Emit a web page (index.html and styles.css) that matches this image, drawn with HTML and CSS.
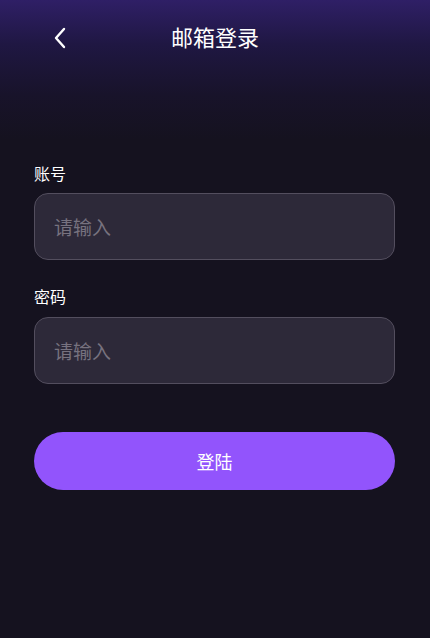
FILE: index.html
```html
<!DOCTYPE html>
<html lang="zh-CN">
<head>
    <meta charset="UTF-8">
    <meta name="viewport" content="width=device-width, initial-scale=1.0">
    <title>邮箱登录</title>
    <link rel="stylesheet" href="styles.css">
</head>
<body>
    <div class="page">
        <div class="header">
            <div class="back">
                <svg width="14" height="22" viewBox="0 0 14 22">
                    <path d="M11 2 L3 11 L11 20" fill="none" stroke="#ffffff" stroke-width="2.4" stroke-linecap="round" stroke-linejoin="round"/>
                </svg>
            </div>
            <h2 class="title">邮箱登录</h2>
        </div>
        <div class="form">
            <div class="label">账号</div>
            <input class="field" type="text" placeholder="请输入">
            <div class="label second">密码</div>
            <input class="field" type="password" placeholder="请输入">
            <button class="button">登陆</button>
        </div>
    </div>
</body>
</html>
```

FILE: styles.css
```css
body{
    margin: 0;
    width: 430px;
    height: 638px;
    background: #15121f;
    font-family: "Noto Sans CJK SC", "Noto Sans", sans-serif;
    overflow: hidden;
}
.page{
    height: 638px;
    background: linear-gradient(180deg, #2f1f66 0px, #1f1742 45px, #18132a 95px, #15121f 140px, #15121f 100%);
    display: flex;
    flex-direction: column;
}
.header{
    height: 76px;
    position: relative;
    display: flex;
    align-items: center;
    justify-content: center;
}
.back{
    position: absolute;
    left: 53px;
    top: 27px;
    width: 14px;
    height: 22px;
}
.back svg{
    display: block;
}
.title{
    margin: 0 0 4px 0;
    color: #ffffff;
    font-size: 22px;
    font-weight: 400;
    line-height: 30px;
}
.form{
    display: flex;
    flex-direction: column;
    padding: 0 35px 0 34px;
    margin-top: 86px;
}
.label{
    color: #ffffff;
    font-size: 16px;
    line-height: 22px;
    margin-bottom: 9px;
}
.second{
    margin-top: 25px;
    margin-bottom: 10px;
}
.field{
    box-sizing: border-box;
    height: 67px;
    width: 100%;
    background: #2d2939;
    border: 1px solid #534e5e;
    border-radius: 14px;
    padding: 0 19px;
    color: #ffffff;
    font-family: inherit;
    font-size: 19px;
    outline: none;
}
.field::placeholder{
    color: #77727f;
}
.button{
    margin-top: 48px;
    height: 58px;
    border: none;
    border-radius: 29px;
    background: #9254fc;
    color: #ffffff;
    font-family: inherit;
    font-size: 18px;
}
```
